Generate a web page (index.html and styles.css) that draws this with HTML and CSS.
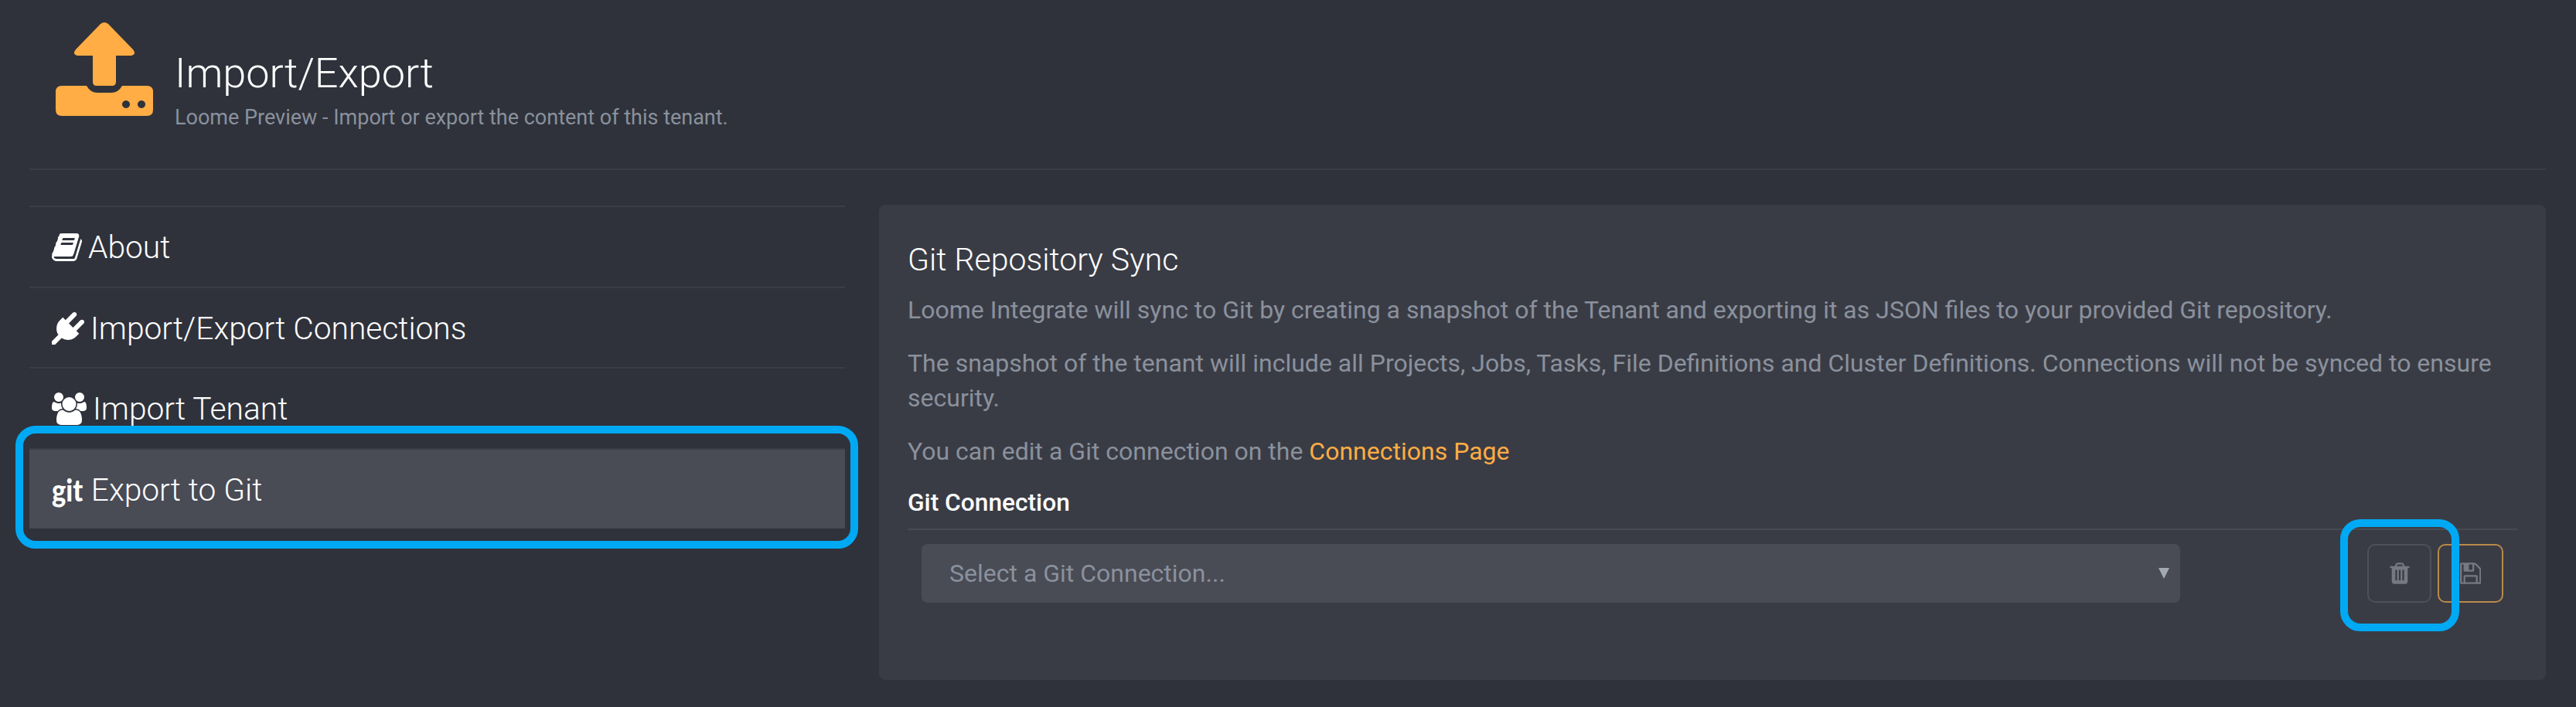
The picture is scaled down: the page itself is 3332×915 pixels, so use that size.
FILE: index.html
```html
<!DOCTYPE html>
<html lang="en">
<head>
  <meta charset="UTF-8" />
  <title>Import/Export</title>
  <link rel="stylesheet" href="styles.css">
</head>
<body>
  <header class="page-header">
    <svg class="page-icon" viewBox="0 0 126 121">
      <path d="M58 2 Q63 -2 68 2 L100 35 Q105 41 98 43 H78 V77 Q78 82 73 82 H53 Q48 82 48 77 V43 H28 Q21 41 26 35 Z" />
      <path fill-rule="evenodd" d="M8 82 H40 Q45 91 54 91 H72 Q81 91 86 82 H118 Q126 82 126 90 V113 Q126 121 118 121 H8 Q0 121 0 113 V90 Q0 82 8 82 Z M91 101 a5 5 0 1 0 0.01 0 Z M111 101 a5 5 0 1 0 0.01 0 Z" />
    </svg>
    <div class="page-title">
      <h1>Import/Export</h1>
      <p>Loome Preview - Import or export the content of this tenant.</p>
    </div>
  </header>

  <div class="content">
    <nav class="side-nav">
      <a class="nav-item" href="#">
        <svg class="nav-icon" viewBox="0 0 1664 1792"><path d="M1639 478q40 57 18 129l-275 906q-19 64-76.500 107.500t-122.500 43.500h-923q-77 0-148.500-53.500t-99.500-131.500q-24-67-2-127 0-4 3-27t4-37q1-8-3-21.500t-3-19.500q2-11 8-21t16.500-23.500 16.500-23.500q23-38 45-91.500t30-91.500q3-10 .5-30t-.5-28q3-11 17-28t17-23q21-36 42-92t25-90q1-9-2.500-32t.5-28q4-13 22-30.500t22-22.500q19-26 42.500-84.500t27.500-96.500q1-8-3-25.500t-2-26.500q2-8 9-18t18-23 17-21q8-12 16.500-30.500t15-35 16-36 19.500-32 26.500-23.500 36-11.500 47.500 5.500l-1 3q38-9 51-9h761q74 0 114 56t18 130l-274 906q-36 119-71.500 153.500t-128.500 34.500h-869q-27 0-38 15-11 16-1 43 24 70 144 70h923q29 0 56-15.500t35-41.500l300-987q7-22 5-57 38 15 59 43zm-1064 2q-4 13 2 22.500t20 9.500h608q13 0 25.500-9.500t16.500-22.500l21-64q4-13-2-22.500t-20-9.500h-608q-13 0-25.500 9.500t-16.500 22.500zm-83 256q-4 13 2 22.500t20 9.500h608q13 0 25.500-9.500t16.500-22.500l21-64q4-13-2-22.500t-20-9.500h-608q-13 0-25.500 9.500t-16.500 22.500z"/></svg>
        About
      </a>
      <a class="nav-item" href="#">
        <svg class="nav-icon" viewBox="0 0 1792 1792"><path d="M1755 453q37 38 37 90.500t-37 90.500l-401 400 150 150-160 160q-163 163-389.500 186.500t-411.500-100.500l-362 362h-181v-181l362-362q-124-185-100.500-411.500t186.500-389.500l160-160 150 150 400-401q38-37 91-37t90 37 37 90.500-37 90.500l-400 401 234 234 401-400q38-37 91-37t90 37z"/></svg>
        Import/Export Connections
      </a>
      <a class="nav-item" href="#">
        <svg class="nav-icon" viewBox="0 0 1920 1792"><path d="M593 896q-162 5-265 128h-134q-82 0-138-40.500t-56-118.500q0-353 124-353 6 0 43.500 21t97.500 42.500 119 21.500q67 0 133-23-5 37-5 66 0 139 81 256zm1071 637q0 120-73 189.500t-194 69.500h-874q-121 0-194-69.500t-73-189.500q0-53 3.500-103.500t14-109 26.500-108.500 43-97.500 62-81 85.500-53.500 111.500-20q10 0 43 21.500t73 48 107 48 135 21.500 135-21.500 107-48 73-48 43-21.500q61 0 111.500 20t85.500 53.500 62 81 43 97.500 26.500 108.500 14 109 3.500 103.500zm-1024-1277q0 106-75 181t-181 75-181-75-75-181 75-181 181-75 181 75 75 181zm704 384q0 159-112.500 271.500t-271.500 112.500-271.500-112.500-112.500-271.500 112.500-271.500 271.500-112.500 271.500 112.500 112.500 271.500zm576 225q0 78-56 118.500t-138 40.500h-134q-103-123-265-128 81-117 81-256 0-29-5-66 66 23 133 23 59 0 119-21.500t97.500-42.500 43.500-21q124 0 124 353zm-128-609q0 106-75 181t-181 75-181-75-75-181 75-181 181-75 181 75 75 181z"/></svg>
        Import Tenant
      </a>
      <a class="nav-item active" href="#">
        <span class="git-mark">git</span>
        Export to Git
        <span class="callout callout-nav"></span>
      </a>
    </nav>

    <section class="panel">
      <h2>Git Repository Sync</h2>
      <p>Loome Integrate will sync to Git by creating a snapshot of the Tenant and exporting it as JSON files to your provided Git repository.</p>
      <p>The snapshot of the tenant will include all Projects, Jobs, Tasks, File Definitions and Cluster Definitions. Connections will not be synced to ensure security.</p>
      <p>You can edit a Git connection on the <a href="#">Connections Page</a></p>
      <h3>Git Connection</h3>
      <div class="form-row">
        <div class="select-box">Select a Git Connection...<span class="select-arrow"></span></div>
        <div class="actions">
          <button class="btn btn-delete">
            <svg viewBox="0 0 1792 1792"><path d="M704 1376v-704q0-14-9-23t-23-9h-64q-14 0-23 9t-9 23v704q0 14 9 23t23 9h64q14 0 23-9t9-23zm256 0v-704q0-14-9-23t-23-9h-64q-14 0-23 9t-9 23v704q0 14 9 23t23 9h64q14 0 23-9t9-23zm256 0v-704q0-14-9-23t-23-9h-64q-14 0-23 9t-9 23v704q0 14 9 23t23 9h64q14 0 23-9t9-23zm-544-992h448l-48-117q-7-9-17-11h-317q-10 2-17 11zm928 32v64q0 14-9 23t-23 9h-96v948q0 83-47 143.500t-113 60.500h-832q-66 0-113-58.500t-47-141.500v-952h-96q-14 0-23-9t-9-23v-64q0-14 9-23t23-9h309l70-167q15-37 54-63t79-26h320q40 0 79 26t54 63l70 167h309q14 0 23 9t9 23z"/></svg>
            <span class="callout callout-btn"></span>
          </button>
          <button class="btn btn-save">
            <svg viewBox="0 0 1536 1792"><path d="M384 1536h768v-384h-768v384zm896 0h128v-896q0-14-10-38.500t-20-34.500l-281-281q-10-10-34-20t-39-10v416q0 40-28 68t-68 28h-576q-40 0-68-28t-28-68v-416h-128v1280h128v-416q0-40 28-68t68-28h832q40 0 68 28t28 68v416zm-384-928v-320q0-13-9.500-22.500t-22.500-9.500h-192q-13 0-22.500 9.500t-9.500 22.500v320q0 13 9.500 22.500t22.500 9.500h192q13 0 22.500-9.500t9.500-22.500zm640 32v928q0 40-28 68t-68 28h-1344q-40 0-68-28t-28-68v-1344q0-40 28-68t68-28h928q40 0 88 20t76 48l280 280q28 28 48 76t20 88z"/></svg>
          </button>
        </div>
      </div>
    </section>
  </div>
</body>
</html>
```

FILE: styles.css
```css
body {
  margin: 0;
  padding: 0 39px 0 38px;
  height: 915px;
  box-sizing: border-box;
  overflow: hidden;
  background-color: #2f323b;
  font-family: Roboto, "Liberation Sans", sans-serif;
  color: #fff;
}

.page-header {
  display: flex;
  align-items: flex-start;
  height: 220px;
  box-sizing: border-box;
  padding: 29px 0 0 34px;
  border-bottom: 2px solid #3a3c48;
}

.page-icon {
  width: 126px;
  height: 121px;
  fill: #ffad44;
  flex-shrink: 0;
}

.page-title {
  margin-left: 28px;
  padding-top: 33px;
}

.page-title h1 {
  margin: 0;
  font-size: 54px;
  font-weight: 300;
  line-height: 66px;
}

.page-title p {
  margin: 6px 0 0;
  font-size: 27px;
  font-weight: 400;
  line-height: 36px;
  color: #8a919d;
}

.content {
  display: flex;
  gap: 44px;
  padding-top: 45px;
}

.side-nav {
  width: 1055px;
  flex-shrink: 0;
  margin-top: 1px;
}

.nav-item {
  position: relative;
  display: flex;
  align-items: center;
  height: 104.500px;
  box-sizing: border-box;
  padding: 2px 0 0 29px;
  border-top: 2px solid #3a3c48;
  font-size: 40.700px;
  font-weight: 300;
  color: #fff;
  text-decoration: none;
}

.nav-item.active {
  background-color: #494b55;
}

.nav-icon {
  height: 42px;
  fill: #fff;
  margin-right: 8px;
  flex-shrink: 0;
}

.git-mark {
  font-family: Lato, sans-serif;
  font-weight: 900;
  font-size: 40px;
  transform: scaleX(0.86);
  transform-origin: left center;
  margin-right: 4px;
}

.callout {
  position: absolute;
  box-sizing: border-box;
  border: 10px solid #00a9f4;
  border-radius: 26px;
  z-index: 5;
  pointer-events: none;
}

.callout-nav {
  top: -31px;
  left: -18px;
  right: -17px;
  bottom: -26px;
}

.callout-btn {
  top: -34px;
  left: -37px;
  right: -38px;
  bottom: -39px;
}

.panel {
  flex: 1;
  height: 615px;
  box-sizing: border-box;
  padding: 47px 37px 0;
  background-color: #3a3c45;
  border-radius: 8px;
}

.panel h2 {
  margin: 0 0 19px;
  font-size: 41px;
  font-weight: 300;
  line-height: 48px;
}

.panel p {
  margin: 0 0 24px;
  font-size: 32px;
  font-weight: 400;
  line-height: 45px;
  color: #8a919d;
}

.panel p a {
  color: #ffad44;
  text-decoration: none;
}

.panel h3 {
  margin: 0;
  padding-bottom: 14px;
  border-bottom: 2px solid #474954;
  font-size: 31.700px;
  font-weight: 500;
  line-height: 39px;
}

.form-row {
  display: flex;
  justify-content: space-between;
  padding: 18px 18px 0;
}

.select-box {
  position: relative;
  width: 1628px;
  height: 76px;
  box-sizing: border-box;
  padding-left: 36px;
  background-color: #494b55;
  border-radius: 8px;
  font-size: 32px;
  font-weight: 400;
  line-height: 76px;
  color: #8a919d;
}

.select-arrow {
  position: absolute;
  right: 14px;
  top: 31px;
  border-left: 7px solid transparent;
  border-right: 7px solid transparent;
  border-top: 14px solid #a3a9b3;
}

.actions {
  display: flex;
  gap: 8px;
}

.btn {
  position: relative;
  display: flex;
  align-items: center;
  justify-content: center;
  height: 76px;
  padding: 0;
  background: none;
  border: 2px solid #4d4f5b;
  border-radius: 10px;
}

.btn svg {
  height: 32px;
  fill: #767982;
}

.btn-delete {
  width: 83px;
}

.btn-save {
  width: 85px;
  border-color: #b98a49;
}
```
